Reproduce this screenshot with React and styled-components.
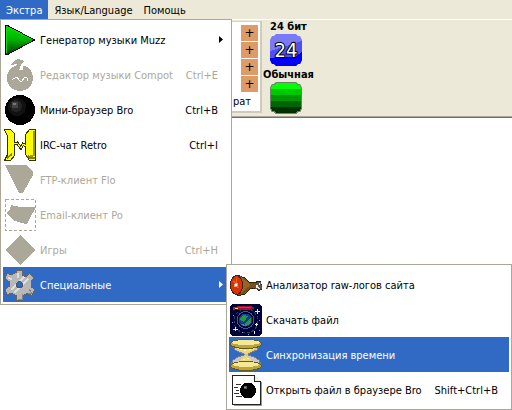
import React from "react";
import styled, { createGlobalStyle, css } from "styled-components";

const Global = createGlobalStyle`
  * { box-sizing: border-box; }
  body { margin: 0; background: #fff; overflow: hidden; }
  body, button { font: 11px/14px Tahoma, "DejaVu Sans Condensed", "Noto Sans", sans-serif; color: #000; }
  button { border: 0; padding: 0; background: none; text-align: left; }
  ul { list-style: none; margin: 0; padding: 0; }
  svg { display: block; flex: none; }
`;

const Window = styled.div`
  min-height: 100vh;
  background: #fff;
`;

const MenuBar = styled.nav`
  display: flex;
  position: relative;
  height: 19px;
  background: #ece9d8;
`;

const MenuTitle = styled.button`
  padding: 2px 5px 0 6px;
  height: 19px;
  white-space: nowrap;
  ${(p) => p.$open && css`background: #316ac5; color: #fff; padding-right: 6px;`}
`;

const menuPanel = css`
  position: absolute;
  background: #fff;
  border: 1px solid #aca899;
  padding: 2px;
`;

const Menu = styled.ul`
  ${menuPanel}
  top: 19px;
  left: 0;
  width: 232px;
  z-index: 1;
`;

const Submenu = styled.ul`
  ${menuPanel}
  top: -3px;
  left: 223px;
  width: 286px;
`;

const Entry = styled.li`
  position: relative;
`;

const EntryButton = styled.button`
  display: flex;
  align-items: center;
  gap: 4px;
  width: 100%;
  height: 35px;
  padding: 0 6px 0 1px;
  white-space: nowrap;
  color: ${(p) => (p.$active ? "#fff" : "#000")};
  background: ${(p) => (p.$active ? "#316ac5" : "transparent")};
  &:disabled { color: #aca899; }
`;

const Label = styled.span`
  flex: 1;
  padding-top: 2px;
`;

const Shortcut = styled.span`
  padding: 2px 5px 0 0;
`;

const Toolbar = styled.header`
  display: flex;
  align-items: flex-start;
  height: 99px;
  background: #ece9d8;
  border-top: 1px solid #fff;
  border-bottom: 1px solid #716f64;
  box-shadow: inset 0 -1px #aca899;
`;

const ShapePanel = styled.section`
  display: flex;
  flex-direction: column;
  align-items: flex-end;
  width: 262px;
  height: 92px;
  margin-top: 1px;
  padding: 3px 2px 0 0;
  gap: 1px;
  background: #fff;
  border: 1px solid #d8d2bd;
  border-right: 2px solid #d0cbb8;
  border-bottom: 2px solid #d0cbb8;
`;

const PlusButton = styled.button`
  width: 17px;
  height: 16px;
  background: #de9a67;
  font: 12px/16px "DejaVu Sans", sans-serif;
  text-align: center;
`;

const ShapeName = styled.span`
  padding: 2px 7px 0 0;
`;

const Modes = styled.section`
  display: flex;
  flex-direction: column;
  padding-left: 1px;
`;

const ModeButton = styled.button`
  display: flex;
  flex-direction: column;
  align-items: center;
  height: 48px;
  font-weight: bold;
  white-space: nowrap;
  svg {
    align-self: flex-start;
    margin-left: 7px;
  }
`;

const Icon = ({ children }) => (
  <svg width="32" height="32" viewBox="0 0 32 32" shapeRendering="crispEdges" aria-hidden="true">
    {children}
  </svg>
);

const GREY = "#aca899";

const PlayIcon = () => (
  <Icon>
    <defs>
      <linearGradient id="play" x1="0" y1="0" x2="0" y2="1">
        <stop offset="0" stopColor="#00e000" />
        <stop offset="0.5" stopColor="#00b000" />
        <stop offset="1" stopColor="#003c00" />
      </linearGradient>
    </defs>
    <path d="M1.5 1.5h2L30.5 16 3.5 30.5h-2z" fill="url(#play)" stroke="#000" />
    <path d="M2.5 2.5v26" stroke="#10e010" />
    <path d="M4 3l23 12" stroke="#00e000" />
  </Icon>
);

const CompotIcon = () => (
  <Icon>
    <circle cx="16" cy="19" r="13" fill={GREY} />
    <path d="M6 6L11 2q4-3 9 0l-3 3v6" fill="none" stroke="#fff" strokeWidth="4" />
    <path d="M7 6l3-4 4-2 4 1 2 2-3 2-1 5h-2l-1-5z" fill={GREY} />
    <path d="M8 21l2-2h1l2-1 3 4h2l3-4 2 1 1 3" fill="none" stroke="#fff" />
  </Icon>
);

const SphereIcon = () => (
  <Icon>
    <circle cx="16" cy="16" r="15" fill="#000" />
    <circle cx="13" cy="13" r="9" fill="#111" />
    <circle cx="12" cy="12" r="6" fill="#242424" />
    <circle cx="11" cy="11" r="3.5" fill="#444" />
    <circle cx="10.5" cy="10" r="1.5" fill="#777" />
  </Icon>
);

const ChatIcon = () => (
  <Icon>
    <path d="M.5.5h6l4 4v22l-4 5h-6l3-6v-18z" fill="#ff0" stroke="#333300" />
    <path d="M31.5.5h-6l-4 5v20l4 6h6z" fill="#ff0" stroke="#333300" />
    <path d="M30 2v24l-5 2" fill="none" stroke="#999900" strokeWidth="2" />
    <path d="M3 29l5-4M24 27l2 2h5" stroke="#808000" strokeWidth="2" fill="none" />
    <path d="M10 15l3-1 4 5 2-4 3 2" fill="none" stroke="#333300" strokeWidth="3" />
    <path d="M9 15l4-1 4 5 2-4 3 2" fill="none" stroke="#ff0" strokeWidth="1" />
  </Icon>
);

const FtpIcon = () => <Icon><path d="M1 1h21l3 2 4 5v3L19 29h-4z" fill={GREY} /></Icon>;

const EmailIcon = () => (
  <Icon>
    <rect x="1.5" y=".5" width="30" height="31" fill="none" stroke={GREY} strokeDasharray="3 2" />
    <path d="M7 6l9 2h15v2l-5 9-3 6-6-1-8-3-6-6 1-3 2-2z" fill={GREY} />
  </Icon>
);

const GamesIcon = () => <Icon><path d="M16 1l15 15-15 15L1 16z" fill={GREY} /></Icon>;

const GearIcon = () => (
  <Icon>
    <path
      d="M13 1.5h5l1 5 3 1 4-3 4 4-3 4v5l4 3-3 6-5-2-4 2-1 5h-5l-1-5-4-2-5 1-2-5 4-3v-5l-4-3 2-5 5 1 4-2z"
      fill="#b8b8b8" stroke="#66665f"
    />
    <path d="M7 21L20 8M10 24l14-14M4 9l4 1M14 4v5" stroke="#dedede" strokeWidth="2" fill="none" />
    <path d="M14 30h4v-5M24 25l4-1-3-4" stroke="#858585" fill="none" />
    <circle cx="15.5" cy="15.5" r="3" fill="#316ac5" stroke="#555" />
  </Icon>
);

const MeatIcon = () => (
  <Icon>
    <path d="M7 6l8 3 4 4 7 1 1-2h3v3h2v5h-2l-1 2-3-3-6 1-5 5-8 2z" fill="#78501c" stroke="#38250c" />
    <path d="M10 7l6 5 5 4-6 4-4 4z" fill="#986528" />
    <path d="M25 15h3v-2h2v3l-2 1 3 2-2 2-2-2h-2z" fill="#eee" stroke="#555" />
    <ellipse cx="6.5" cy="16" rx="6" ry="9.5" fill="#d53405" stroke="#442018" />
    <path d="M3 12l3 2M6 9v5M9 19l-3-2" stroke="#f45a16" />
    <circle cx="6" cy="16" r="2" fill="#ff9b70" /><path d="M5 15h2v2H5z" fill="#fff" />
  </Icon>
);

const SpaceIcon = () => (
  <Icon>
    <rect width="32" height="32" rx="4" fill="#000038" />
    <circle cx="16" cy="17" r="12" fill="none" stroke="#084c60" strokeDasharray="3 2" />
    <circle cx="15.5" cy="16" r="8.5" fill="#000028" stroke="#38589a" />
    <circle cx="15.5" cy="16" r="6.5" fill="#103a94" />
    <path d="M10 14l4-3 4 1-2 3-2 3-3-1zM16 18l5-4v4l-3 3h-3z" fill="#289638" />
    <path d="M11 20l5 2 5-4" fill="none" stroke="#3a80c8" />
    <path d="M7 2h14l4 2-4 2H7z" fill="#a50b2c" /><path d="M8 3h13" stroke="#e02c48" />
    <path d="M3 3h5v2H5v1H3z" fill="#f00" /><path d="M5 4h3" stroke="#ff0" />
    <path d="M27 5v5M25 7.5h5M26 19v3M24.5 20.5h3M5 23v4M3 25.5h5M24 27v3" stroke="#e0ecff" />
    <path d="M3 11h1M2 18h1M12 28h1M29 16h1M18 30h1M29 26h1" stroke="#73a6dc" />
  </Icon>
);

const HourglassIcon = () => (
  <Icon>
    <path d="M3 7h26l-2 4-5 2-4 2v1l6 2 5 3 2 5H1l2-5 5-3 6-2v-1l-5-2-4-2z" fill="#c8c8c8" stroke="#80807a" />
    <path d="M6 9h20l-4 3-6 3-6-3zM16 17l5 3 3 4H8l3-4z" fill="#eeda70" />
    <ellipse cx="16" cy="5" rx="15.5" ry="4.500" fill="#bda537" stroke="#65591d" />
    <ellipse cx="16" cy="3.500" rx="14" ry="2.500" fill="#f2e898" />
    <ellipse cx="16" cy="27" rx="15.5" ry="4.500" fill="#bda537" stroke="#65591d" />
    <ellipse cx="16" cy="25.500" rx="13" ry="2.500" fill="#f2e898" />
    <path d="M10 11l2-1M14 12l2-1M19 11l2-1M13 21l2-1M17 20l2-1" stroke="#fffbc0" />
  </Icon>
);

const OpenIcon = () => (
  <Icon>
    <path d="M4 31.5h27.5V8" fill="none" stroke="#999" />
    <path d="M2.5 1.5h22l6 6v23h-28z" fill="#fff" stroke="#222" />
    <path d="M24.5 1.5v6h6" fill="#eee" stroke="#222" />
    <circle cx="18" cy="16.5" r="8" fill="#000" />
    <path d="M14 12h3v3h-3z" fill="#555" /><path d="M14 13h2" stroke="#999" />
    <path d="M6 10.5h5M4 13.5h4M6 16.5h3M4 19.5h5M6 22.5h6" stroke="#333" />
  </Icon>
);

const BODY = "M6 0h20l2 2h2l2 4v20l-2 4h-2l-2 2H6l-2-2H2l-2-4V6l2-4h2z";

const DepthIcon = () => (
  <Icon>
    <defs><clipPath id="depth"><path d={BODY} /></clipPath></defs>
    <g clipPath="url(#depth)">
      <path d="M0 0h32v18H0z" fill="#7a7af6" />
      <path d="M0 17l32-10v25H0z" fill="#5050f0" />
      <path d="M0 24h3l4-1h18l7-5v14H0z" fill="#0000f5" />
    </g>
    <text x="16" y="23" textAnchor="middle" fontFamily="DejaVu Sans Condensed" fontSize="20"
      fontWeight="normal" fill="#fff" stroke="#000" strokeWidth="2" paintOrder="stroke">24</text>
  </Icon>
);

const NormalIcon = () => (
  <Icon>
    <defs><clipPath id="normal"><path d={BODY} /></clipPath></defs>
    <g clipPath="url(#normal)">
      <path d="M0 0h32v7H0z" fill="#00ff00" />
      <path d="M0 7h32v6H0z" fill="#00c800" />
      <path d="M0 13h32v6H0z" fill="#009600" />
      <path d="M0 19h32v6H0z" fill="#006400" />
      <path d="M0 25h32v7H0z" fill="#003200" />
      <path d={BODY} fill="none" stroke="#708070" strokeWidth="2" />
    </g>
  </Icon>
);

const Arrow = () => (
  <svg width="4" height="7" viewBox="0 0 4 7" aria-hidden="true">
    <path d="M0 0l4 3.5L0 7z" fill="currentColor" />
  </svg>
);

const extras = [
  { label: "Генератор музыки Muzz", icon: PlayIcon, arrow: true },
  { label: "Редактор музыки Compot", icon: CompotIcon, keys: "Ctrl+E", disabled: true },
  { label: "Мини-браузер Bro", icon: SphereIcon, keys: "Ctrl+B" },
  { label: "IRC-чат Retro", icon: ChatIcon, keys: "Ctrl+I" },
  { label: "FTP-клиент Flo", icon: FtpIcon, disabled: true },
  { label: "Email-клиент Po", icon: EmailIcon, disabled: true },
  { label: "Игры", icon: GamesIcon, keys: "Ctrl+H", disabled: true },
  {
    label: "Специальные", icon: GearIcon, arrow: true, active: true,
    items: [
      { label: "Анализатор raw-логов сайта", icon: MeatIcon },
      { label: "Скачать файл", icon: SpaceIcon },
      { label: "Синхронизация времени", icon: HourglassIcon, active: true },
      { label: "Открыть файл в браузере Bro", icon: OpenIcon, keys: "Shift+Ctrl+B" },
    ],
  },
];

const MenuEntry = ({ item }) => (
  <Entry role="none">
    <EntryButton type="button" role="menuitem" disabled={item.disabled} $active={item.active}>
      <item.icon />
      <Label>{item.label}</Label>
      {item.keys && <Shortcut>{item.keys}</Shortcut>}
      {item.arrow && <Arrow />}
    </EntryButton>
    {item.items && (
      <Submenu role="menu" aria-label={item.label}>
        {item.items.map((sub) => <MenuEntry key={sub.label} item={sub} />)}
      </Submenu>
    )}
  </Entry>
);

export default function App() {
  return (
    <Window>
      <Global />
      <MenuBar>
        <MenuTitle type="button" $open aria-expanded="true">Экстра</MenuTitle>
        <MenuTitle type="button">Язык/Language</MenuTitle>
        <MenuTitle type="button">Помощь</MenuTitle>
        <Menu role="menu" aria-label="Экстра">
          {extras.map((item) => <MenuEntry key={item.label} item={item} />)}
        </Menu>
      </MenuBar>
      <Toolbar>
        <ShapePanel>
          {[1, 2, 3, 4].map((n) => <PlusButton key={n} type="button">+</PlusButton>)}
          <ShapeName>рат</ShapeName>
        </ShapePanel>
        <Modes>
          <ModeButton type="button">24 бит<DepthIcon /></ModeButton>
          <ModeButton type="button">Обычная<NormalIcon /></ModeButton>
        </Modes>
      </Toolbar>
    </Window>
  );
}
